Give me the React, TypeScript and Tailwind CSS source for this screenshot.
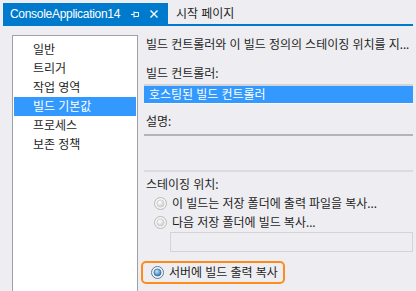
import React from "react";

const font = { fontFamily: '"Segoe UI", "Noto Sans", "Noto Sans CJK KR", sans-serif' };

function Radio({ checked }: { checked?: boolean }) {
  return (
    <svg width="13" height="13" viewBox="0 0 13 13" className="shrink-0">
      <defs>
        <radialGradient id={checked ? "rg1" : "rg0"} cx="0.4" cy="0.35" r="0.7">
          <stop offset="0" stopColor={checked ? "#bfe6ff" : "#ffffff"} />
          <stop offset="1" stopColor={checked ? "#1e6fae" : "#c8c8c8"} />
        </radialGradient>
      </defs>
      <circle cx="6.5" cy="6.5" r="6" fill="#f4f4f4" stroke={checked ? "#5a7a9a" : "#b8b8b8"} />
      <circle cx="6.5" cy="6.5" r="3.6" fill={`url(#${checked ? "rg1" : "rg0"})`} stroke={checked ? "#2b5c86" : "#c4c4c4"} strokeWidth="0.6" />
    </svg>
  );
}

export default function App() {
  const items = ["일반", "트리거", "작업 영역", "빌드 기본값", "프로세스", "보존 정책"];
  return (
    <div className="w-[416px] h-[291px] overflow-hidden bg-[#eeeef2] text-[12px] text-[#1e1e1e]" style={font}>
      {/* tab bar */}
      <div className="pt-[5px] px-[3px]">
        <div className="flex items-end h-[21px] border-b-2 border-[#007acc]">
          <div className="grid grid-cols-[111px_10px_10px] gap-x-[9px] items-center h-[21px] min-w-[165px] bg-[#007acc] text-white pl-[7px]">
            <div
              className="text-[12px] tracking-[-0.3px] leading-none whitespace-nowrap"
              style={{ fontFamily: '"Liberation Sans", Arial, sans-serif' }}
            >
              ConsoleApplication14
            </div>
            <svg width="10" height="10" viewBox="0 0 10 10">
              <path d="M1 5.5H4M4 2.5V8.5M4 3.5H8.5V7.5H4" stroke="white" strokeWidth="1" fill="none" />
            </svg>
            <svg width="10" height="10" viewBox="0 0 10 10">
              <path d="M1.5 1.5L8.5 8.5M8.5 1.5L1.5 8.5" stroke="white" strokeWidth="1.4" />
            </svg>
          </div>
          <div className="h-[21px] flex items-center pl-[8px] text-[12px] text-[#1e1e1e] whitespace-nowrap">시작 페이지</div>
        </div>
      </div>
      <div className="flex mt-[9px]">
        {/* left list */}
        <div className="ml-[12px] w-[126px] h-[260px] bg-white border border-[#a0a0a8] border-b-0 pt-[4px] px-[1px]">
          {items.map((t, i) => (
            <div
              key={t}
              className={`h-[19px] leading-[19px] pl-[19px] ${i === 3 ? "bg-[#3399ff] text-white" : ""}`}
            >
              {t}
            </div>
          ))}
        </div>
        {/* right panel */}
        <div className="ml-[6px] flex-1 pr-[3px]">
          <div className="pl-[2px] leading-[16px] h-[16px] mt-[2px]">빌드 컨트롤러와 이 빌드 정의의 스테이징 위치를 지...</div>
          <div className="pl-[2px] leading-[16px] mt-[13px]">빌드 컨트롤러:</div>
          <div className="mt-[2px] border-t-2 border-[#d4d4d8] bg-[#3399ff] text-white h-[20px] leading-[18px] pl-[5px] border-b border-b-[#f8f8fa]">
            호스팅된 빌드 컨트롤러
          </div>
          <div className="pl-[2px] leading-[16px] mt-[10px]">설명:</div>
          <div className="mt-[4px] h-[38px] border-t-2 border-[#b4b4b8] border-b-2 border-b-[#dcdce0] bg-[#eeeef2]" />
          <div className="pl-[2px] leading-[16px] mt-[5px]">스테이징 위치:</div>
          <div className="pl-[10px] mt-[1px] flex flex-col">
            <div className="flex items-center gap-[5px] h-[19px]">
              <Radio />
              <span>이 빌드는 저장 폴더에 출력 파일을 복사...</span>
            </div>
            <div className="flex items-center gap-[5px] h-[19px]">
              <Radio />
              <span>다음 저장 폴더에 빌드 복사...</span>
            </div>
            <div className="ml-[16px] h-[20px] border border-[#d4d4d8] bg-[#eeeef2]" />
          </div>
          <div className="mt-[9px] -ml-[3px] w-[144px] h-[23px] rounded-[5px] border-2 border-[#ff8c1a] flex items-center pl-[8px] gap-[5px]">
            <Radio checked />
            <span>서버에 빌드 출력 복사</span>
          </div>
        </div>
      </div>
    </div>
  );
}
